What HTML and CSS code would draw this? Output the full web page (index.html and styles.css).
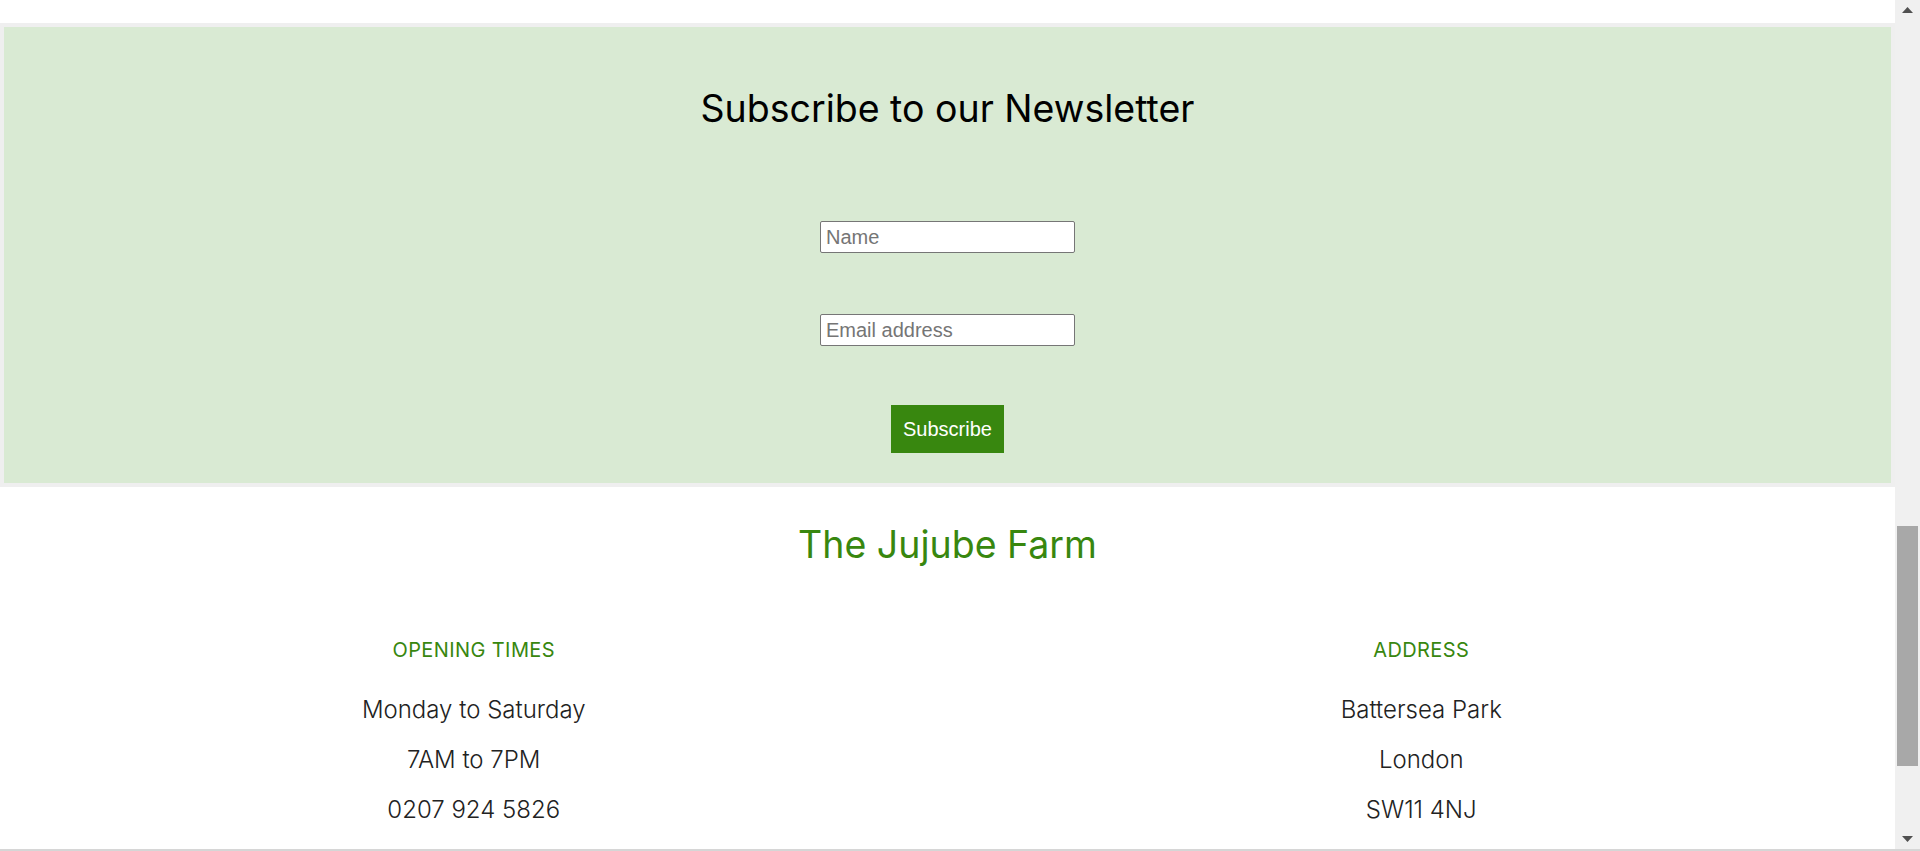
FILE: index.html
```html
<!DOCTYPE html>
<html lang="en">
<head>
<meta charset="utf-8">
<title>The Jujube Farm</title>
<link rel="stylesheet" href="styles.css">
</head>
<body>
<div class="window">
  <div class="page">
    <section class="newsletter">
      <h2 class="newsletter-title">Subscribe to our Newsletter</h2>
      <form class="newsletter-form">
        <input class="field" type="text" placeholder="Name">
        <input class="field field-email" type="email" placeholder="Email address">
        <button class="subscribe-btn" type="button">Subscribe</button>
      </form>
    </section>
    <footer class="footer">
      <h2 class="brand">The Jujube Farm</h2>
      <div class="footer-cols">
        <div class="footer-col">
          <h3 class="col-title">OPENING TIMES</h3>
          <p class="col-line">Monday to Saturday</p>
          <p class="col-line">7AM to 7PM</p>
          <p class="col-line">0207 924 5826</p>
        </div>
        <div class="footer-col">
          <h3 class="col-title">ADDRESS</h3>
          <p class="col-line">Battersea Park</p>
          <p class="col-line">London</p>
          <p class="col-line">SW11 4NJ</p>
        </div>
      </div>
    </footer>
  </div>
  <div class="scrollbar">
    <div class="sb-arrow sb-up">
      <svg width="11" height="6" viewBox="0 0 11 6"><path d="M0 6 L5.5 0 L11 6 Z" fill="#505050"/></svg>
    </div>
    <div class="sb-track">
      <div class="sb-thumb"></div>
    </div>
    <div class="sb-arrow sb-down">
      <svg width="11" height="6" viewBox="0 0 11 6"><path d="M0 0 L11 0 L5.5 6 Z" fill="#505050"/></svg>
    </div>
  </div>
</div>
<div class="window-edge"></div>
</body>
</html>
```
FILE: styles.css
```css
* { box-sizing: border-box; }

html, body {
  margin: 0;
  padding: 0;
  height: 851px;
  overflow: hidden;
  background: #ffffff;
}

body {
  font-family: Inter, "Liberation Sans", sans-serif;
  color: #222;
  display: flex;
  flex-direction: column;
}

.window {
  display: flex;
  height: 849px;
}

.page {
  flex: 1;
  padding-top: 23px;
  overflow: hidden;
}

/* Newsletter */
.newsletter {
  background: #d9ead3;
  border: 4px solid #efefef;
  padding: 57px 0 30px;
  display: flex;
  flex-direction: column;
  align-items: center;
}

.newsletter-title {
  margin: 0;
  font-size: 37.5px;
  line-height: 50px;
  font-weight: 400;
  color: #000;
}

.newsletter-form {
  margin-top: 87px;
  display: flex;
  flex-direction: column;
  align-items: center;
}

.field {
  width: 255px;
  height: 32px;
  padding: 3px 5px;
  border: 1px solid #767676;
  border-radius: 2px;
  background: #fff;
  font-family: "Liberation Sans", Arial, sans-serif;
  font-size: 20px;
  color: #000;
}

.field::placeholder { color: #757575; }

.field-email { margin-top: 61px; }

.subscribe-btn {
  margin-top: 59px;
  height: 48px;
  padding: 0 12px;
  border: none;
  background: #38870f;
  color: #fff;
  font-family: "Liberation Sans", Arial, sans-serif;
  font-size: 20px;
  line-height: 24px;
}

/* Footer */
.footer {
  padding-top: 36px;
  text-align: center;
}

.brand {
  margin: 0;
  font-size: 37.5px;
  line-height: 44px;
  font-weight: 400;
  color: #38870f;
}

.footer-cols {
  margin-top: 71px;
  display: grid;
  grid-template-columns: 1fr 1fr;
}

.col-title {
  margin: 0 0 23px;
  font-size: 20px;
  line-height: 24px;
  font-weight: 400;
  letter-spacing: 0.4px;
  color: #38870f;
}

.col-line {
  margin: 0;
  font-size: 24px;
  line-height: 50px;
  font-weight: 300;
  color: #222;
}

/* Fake browser scrollbar */
.scrollbar {
  width: 25px;
  background: #f0f0f0;
  display: flex;
  flex-direction: column;
}

.sb-arrow {
  height: 20px;
  display: flex;
  align-items: center;
  justify-content: center;
}

.sb-up { align-items: flex-start; padding-top: 7px; }
.sb-down { align-items: flex-end; padding-bottom: 7px; }

.sb-track {
  flex: 1;
  padding: 0 2px;
}

.sb-thumb {
  margin-top: 506px;
  height: 240px;
  background: #a8a8a8;
}

.window-edge {
  height: 2px;
  background: #d6d6d6;
}
```
